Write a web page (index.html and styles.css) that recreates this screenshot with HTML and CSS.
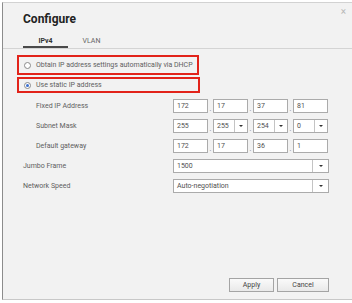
FILE: index.html
```html
<!DOCTYPE html>
<html lang="en">
<head>
  <meta charset="UTF-8">
  <meta name="viewport" content="width=device-width, initial-scale=1.0">
  <title>Configure</title>
  <link rel="stylesheet" href="styles.css">
</head>
<body>
  <div class="dialog">
    <header class="head">
      <div class="title-row">
        <h1>Configure</h1>
        <span class="close">&times;</span>
      </div>
      <nav class="tabs">
        <a class="tab active" href="#">IPv4</a>
        <a class="tab" href="#">VLAN</a>
      </nav>
    </header>

    <main class="panel">
      <label class="choice choice-dhcp"><span class="radio"></span>Obtain IP address settings automatically via DHCP</label>
      <label class="choice choice-static"><span class="radio on"></span>Use static IP address</label>

      <div class="form">
        <div class="row">
          <span class="label sub">Fixed IP Address</span>
          <div class="ip">
            <span class="field">172</span><span class="dot">.</span>
            <span class="field">17</span><span class="dot">.</span>
            <span class="field">37</span><span class="dot">.</span>
            <span class="field">81</span>
          </div>
        </div>
        <div class="row">
          <span class="label sub">Subnet Mask</span>
          <div class="ip">
            <span class="field">255</span><span class="dot">.</span>
            <span class="field drop"><span class="val">255</span><span class="arrow"></span></span><span class="dot">.</span>
            <span class="field drop"><span class="val">254</span><span class="arrow"></span></span><span class="dot">.</span>
            <span class="field drop"><span class="val">0</span><span class="arrow"></span></span>
          </div>
        </div>
        <div class="row">
          <span class="label sub">Default gateway</span>
          <div class="ip">
            <span class="field">172</span><span class="dot">.</span>
            <span class="field">17</span><span class="dot">.</span>
            <span class="field">36</span><span class="dot">.</span>
            <span class="field">1</span>
          </div>
        </div>
        <div class="row">
          <span class="label">Jumbo Frame</span>
          <span class="field drop wide"><span class="val">1500</span><span class="arrow"></span></span>
        </div>
        <div class="row">
          <span class="label">Network Speed</span>
          <span class="field drop wide"><span class="val">Auto-negotiation</span><span class="arrow"></span></span>
        </div>
      </div>
    </main>

    <footer class="actions">
      <button class="btn btn-apply">Apply</button>
      <button class="btn btn-cancel">Cancel</button>
    </footer>
  </div>
</body>
</html>
```

FILE: styles.css
```css
body {
  margin: 0;
  background: #fff;
  font-family: Roboto, "Liberation Sans", sans-serif;
  color: #606060;
}
.dialog {
  box-sizing: border-box;
  margin: 2px 0 0 2px;
  width: 350px;
  height: 298px;
  background: #f2f2f2;
  border-top: 1px solid #d2d2d2;
  border-left: 1px solid #8c8c8c;
  border-bottom: 1px solid #c8c8c8;
  display: flex;
  flex-direction: column;
}
.head {
  padding-left: 20px;
}
.title-row {
  display: flex;
  justify-content: space-between;
  align-items: flex-start;
}
.title-row h1 {
  margin: 9px 0 0 0;
  font-size: 12px;
  line-height: 14px;
  font-weight: 700;
  color: #222;
}
.close {
  margin: 4px 6px 0 0;
  font-size: 10px;
  line-height: 10px;
  color: #b8b8b8;
}
.tabs {
  display: flex;
  gap: 1px;
  margin: 11px 0 0 -20px;
  padding-left: 20px;
  border-bottom: 1px solid #d4d4d4;
}
.tab {
  width: 45px;
  text-align: center;
  font-size: 7px;
  line-height: 9px;
  color: #666;
  text-decoration: none;
  border-bottom: 2px solid transparent;
}
.tab.active {
  font-weight: 700;
  color: #333;
  border-bottom-color: #4a4a4a;
}
.panel {
  padding: 6px 0 0 14px;
}
.choice {
  box-sizing: border-box;
  display: flex;
  align-items: center;
  gap: 5px;
  border: 2px solid #e2231a;
  padding-left: 5px;
  font-size: 7px;
  color: #606060;
}
.choice-dhcp {
  width: 182px;
  height: 20px;
}
.choice-static {
  width: 183px;
  height: 16px;
  margin-top: 2px;
}
.radio {
  box-sizing: border-box;
  width: 7px;
  height: 7px;
  border: 1px solid #8a8a8a;
  border-radius: 50%;
  background: #fff;
  display: flex;
  align-items: center;
  justify-content: center;
}
.radio.on::after {
  content: "";
  width: 3px;
  height: 3px;
  border-radius: 50%;
  background: #3a6fd0;
}
.form {
  display: flex;
  flex-direction: column;
  gap: 6px;
  margin: 6px 0 0 -14px;
}
.row {
  display: grid;
  grid-template-columns: 170px auto;
  align-items: center;
  height: 14px;
}
.label {
  padding-left: 20px;
  font-size: 7px;
  color: #606060;
}
.label.sub {
  padding-left: 33px;
}
.ip {
  display: flex;
}
.field {
  box-sizing: border-box;
  display: flex;
  align-items: center;
  width: 35px;
  height: 14px;
  padding-left: 3px;
  background: #fff;
  border: 1px solid #ababab;
  font-size: 7px;
  color: #505050;
}
.dot {
  width: 5px;
  text-align: center;
  font-size: 7px;
  line-height: 7px;
  align-self: flex-end;
  color: #777;
}
.drop .val {
  flex: 1;
}
.arrow {
  box-sizing: border-box;
  width: 13px;
  height: 100%;
  border-left: 1px solid #c4c4c4;
  display: flex;
  align-items: center;
  justify-content: center;
}
.arrow::after {
  content: "";
  border-left: 2px solid transparent;
  border-right: 2px solid transparent;
  border-top: 2px solid #333;
}
.field.wide {
  width: 156px;
}
.field.wide .arrow {
  width: 16px;
}
.actions {
  margin-top: auto;
  display: flex;
  justify-content: flex-end;
  gap: 3px;
  padding: 0 23px 7px 0;
}
.btn {
  box-sizing: border-box;
  height: 14px;
  padding: 0;
  font-family: Roboto, "Liberation Sans", sans-serif;
  font-size: 7px;
  color: #444;
  background: linear-gradient(#fafafa, #e9e9e9);
  border: 1px solid #a4a4a4;
}
.btn-apply {
  width: 45px;
}
.btn-cancel {
  width: 52px;
}
```
